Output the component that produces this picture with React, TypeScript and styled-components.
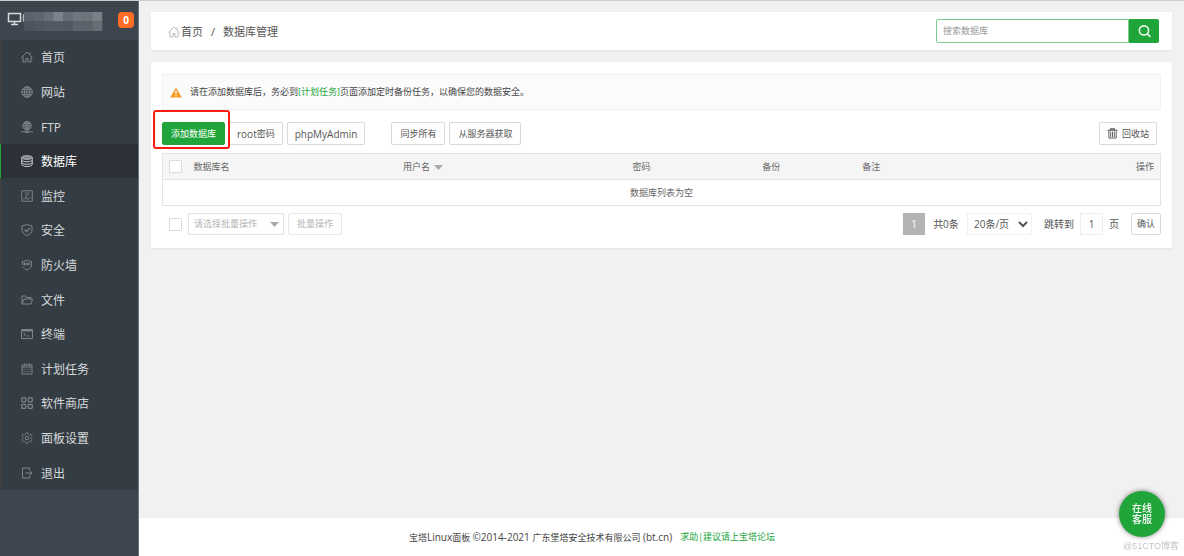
import React from "react";
import styled, { createGlobalStyle, css } from "styled-components";

const green = "#20a53a";
const line = "#e4e4e4";

const GlobalStyle = createGlobalStyle`
  * { box-sizing: border-box; }
  body {
    margin: 0;
    background: #f1f1f1;
    color: #666;
    font-family: "Open Sans", "Noto Sans CJK SC", sans-serif;
    font-size: 9px;
    line-height: 14px;
  }
  button, input, select { font: inherit; color: inherit; margin: 0; }
  button { cursor: pointer; }
  a { text-decoration: none; color: inherit; }
`;

const Page = styled.div`
  display: flex;
  min-height: 100vh;
  border-top: 1px solid #ccc;
`;

const Sidebar = styled.aside`
  flex: 0 0 139px;
  background: #3d454e;
  border-right: 1px solid #6c737a;
`;

const Brand = styled.header`
  display: flex;
  align-items: center;
  height: 39px;
  padding: 0 4px 2px 7px;
`;

const HostMask = styled.svg`
  flex: none;
  margin-right: auto;
`;

const Count = styled.span`
  width: 16px;
  border-radius: 4px;
  background: #ff6c26;
  color: #fff;
  font-size: 10px;
  font-weight: 700;
  line-height: 16px;
  text-align: center;
`;

const Menu = styled.nav`
  display: grid;
  grid-auto-rows: 1fr;
  min-height: 450px;
  background: #353d44;
`;

const MenuItem = styled.a<{ $active?: boolean }>`
  display: flex;
  align-items: center;
  gap: 8px;
  padding-left: 20px;
  border-left: 1px solid #463f3e;
  color: #d6d9db;
  font-size: 12px;
  line-height: 18px;
  svg { color: #7e8489; }
  ${(p) =>
    p.$active &&
    css`
      background: #2c3138;
      border-left-color: ${green};
      color: #fff;
      svg { color: #c3c6c9; }
    `}
`;

const MenuLabel = styled.span`
  padding-top: 2px;
`;

const Main = styled.main`
  flex: 1;
  min-width: 0;
  display: flex;
  flex-direction: column;
`;

const Content = styled.div`
  flex: 1;
  display: flex;
  flex-direction: column;
  gap: 12px;
  padding: 11px 12px 12px;
`;

const Card = styled.section`
  background: #fff;
  box-shadow: 0 1px 2px rgba(0, 0, 0, 0.06);
`;

const TopBar = styled(Card)`
  display: flex;
  align-items: center;
  justify-content: space-between;
  height: 38px;
  padding: 0 13px 0 17px;
`;

const Crumbs = styled.nav`
  display: flex;
  align-items: center;
  padding-top: 2px;
  color: #555;
  font-size: 11px;
  line-height: 16px;
  svg { color: #bbb; margin-right: 1px; }
`;

const Slash = styled.span`
  padding: 0 8px;
`;

const SearchForm = styled.form`
  display: flex;
  height: 24px;
`;

const SearchInput = styled.input`
  width: 193px;
  padding: 0 6px;
  border: 1px solid #7fca8d;
  border-radius: 2px 0 0 2px;
  background: #fff;
  outline: 0;
  &::placeholder { color: #999; opacity: 1; }
`;

const SearchButton = styled.button`
  display: grid;
  place-items: center;
  width: 30px;
  padding: 0;
  border: 0;
  border-radius: 0 2px 2px 0;
  background: ${green};
  color: #e9f6eb;
`;

const Panel = styled(Card)`
  padding: 12px 11px 13px;
`;

const Notice = styled.p`
  display: flex;
  align-items: center;
  height: 36px;
  margin: 0;
  padding: 0 7px;
  border: 1px solid #f0f0f0;
  background: #fbfbfb;
  color: #444;
  svg { margin-right: 8px; }
`;

const GreenLink = styled.a`
  color: ${green};
`;

const Latin = styled.span`
  font-size: 10px;
`;

const Toolbar = styled.div`
  display: flex;
  gap: 4px;
  padding: 12px 4px 8px 0;
`;

const Button = styled.button<{ $primary?: boolean; $muted?: boolean; $tight?: boolean }>`
  display: inline-flex;
  align-items: center;
  height: 23px;
  padding: 0 ${(p) => (p.$tight ? 7 : 8)}px;
  border: 1px solid ${(p) => (p.$primary ? green : p.$muted ? "#e8e8e8" : "#d9d9d9")};
  border-radius: 2px;
  background: ${(p) => (p.$primary ? green : "#fff")};
  color: ${(p) => (p.$primary ? "#fff" : p.$muted ? "#b5b5b5" : "#555")};
  white-space: nowrap;
  svg { margin-right: 4px; }
`;

const Marked = styled.div`
  position: relative;
  &::after {
    content: "";
    position: absolute;
    inset: -12px -5px -4px -9px;
    border: 2px solid #fb1c10;
    border-radius: 3px;
    pointer-events: none;
  }
`;

const Spacer = styled.span<{ $wide?: boolean }>`
  ${(p) => (p.$wide ? "flex: 1;" : "width: 18px;")}
`;

const Table = styled.table`
  width: 100%;
  table-layout: fixed;
  border-collapse: collapse;
  border: 1px solid ${line};
`;

const Th = styled.th<{ $w?: string; $right?: boolean }>`
  width: ${(p) => p.$w ?? "auto"};
  height: 26px;
  padding: 0 6px;
  border-bottom: 1px solid ${line};
  background: #f5f5f5;
  font-weight: 400;
  text-align: ${(p) => (p.$right ? "right" : "left")};
  svg { margin-left: 4px; vertical-align: middle; }
`;

const Empty = styled.td`
  height: 26px;
  padding: 0;
  text-align: center;
`;

const Check = styled.input.attrs({ type: "checkbox" })`
  appearance: none;
  display: block;
  flex: none;
  width: 13px;
  height: 13px;
  border: 1px solid #dcdcdc;
  border-radius: 1px;
  background: #fff;
  &:checked { background: ${green}; }
`;

const TableFoot = styled.div`
  display: flex;
  align-items: center;
  gap: 4px;
  padding: 7px 0 0 7px;
  ${Button} { height: 22px; }
`;

const BatchBox = styled.label`
  display: grid;
  align-items: center;
  width: 96px;
  height: 22px;
  margin-left: 2px;
  color: #b5b5b5;
  > * { grid-area: 1 / 1; }
  svg { justify-self: end; margin-right: 5px; pointer-events: none; }
`;

const BatchSelect = styled.select`
  appearance: none;
  height: 22px;
  padding: 0 5px;
  border: 1px solid #e4e4e4;
  border-radius: 1px;
  background: #fff;
`;

const Pager = styled.div`
  display: flex;
  align-items: center;
  color: #555;
  font-size: 10px;
`;

const Current = styled.span`
  width: 22px;
  background: #b3b3b3;
  color: #fff;
  line-height: 22px;
  text-align: center;
`;

const Total = styled.span`
  width: 42px;
  line-height: 22px;
  text-align: center;
`;

const PageSize = styled.select`
  width: 65px;
  height: 22px;
  margin-right: 12px;
  padding: 0 2px;
  border: 1px solid #f0f0f0;
  background: #fff;
`;

const JumpLabel = styled.label`
  display: flex;
  align-items: center;
  gap: 6px;
  margin-right: 12px;
`;

const PageNumber = styled.input`
  width: 23px;
  height: 22px;
  padding: 0;
  border: 1px solid #eee;
  text-align: center;
`;

const Confirm = styled(Button)`
  padding: 0 5px;
  font-size: 9px;
`;

const Footer = styled.footer`
  display: flex;
  align-items: center;
  justify-content: center;
  gap: 8px;
  height: 38px;
  padding-right: 139px;
  background: #fff;
  color: #444;
`;

const Service = styled.button`
  position: fixed;
  right: 19px;
  bottom: 19px;
  width: 46px;
  height: 46px;
  padding: 0 12px;
  border: 0;
  border-radius: 50%;
  background: ${green};
  box-shadow: 0 0 5px rgba(0, 0, 0, 0.5);
  color: #fff;
  font-size: 10px;
  font-weight: 500;
  line-height: 11px;
`;

const Watermark = styled.span`
  position: fixed;
  right: 5px;
  bottom: 3px;
  color: #c4c4c4;
  font-family: "Liberation Sans", "Noto Sans CJK SC", sans-serif;
`;

const Icon = ({
  children,
  size = 12,
  weight = 2,
}: {
  children: React.ReactNode;
  size?: number;
  weight?: number;
}) => (
  <svg width={size} height={size} viewBox="0 0 24 24" fill="none" stroke="currentColor" strokeWidth={weight} aria-hidden="true">
    {children}
  </svg>
);

const homeShape = (
  <>
    <path d="M1 13 12 2l11 11" />
    <path d="M4 11v11h6v-7h4v7h6V11M18 7V3" />
  </>
);

const menu: { label: string; icon: React.ReactNode; active?: boolean }[] = [
  { label: "首页", icon: homeShape },
  {
    label: "网站",
    icon: (
      <>
        <circle cx="12" cy="12" r="10.5" />
        <ellipse cx="12" cy="12" rx="5" ry="10.5" />
        <path d="M12 1v22M1 12h22M3 6.500h18M3 17.500h18" />
      </>
    ),
  },
  {
    label: "FTP",
    icon: (
      <>
        <circle cx="12" cy="9.500" r="8.500" />
        <ellipse cx="12" cy="9.500" rx="4" ry="8.500" />
        <path d="M12 1v17M4 9.500h16M5 5h14M5 14h14" />
        <path d="M0 21.500h9M15 21.500h9M9 20h6v3H9z" />
      </>
    ),
  },
  {
    label: "数据库",
    active: true,
    icon: (
      <>
        <ellipse cx="12" cy="5" rx="10.500" ry="3.500" fill="currentColor" fillOpacity="0.5" />
        <path d="M1.500 5v14c0 2 4.500 4 10.500 4s10.500-2 10.500-4V5M1.500 10c0 2 4.500 3.500 10.500 3.500S22.500 12 22.500 10M1.500 15c0 2 4.500 3.500 10.500 3.500S22.500 17 22.500 15" />
      </>
    ),
  },
  {
    label: "监控",
    icon: (
      <>
        <path d="M1.500 1.500h21v21h-21z" />
        <path d="M7 6h10M8 10h8M4 18h4l2-5 3 7 2-4h5" strokeWidth="1.5" />
      </>
    ),
  },
  {
    label: "安全",
    icon: (
      <>
        <path d="M12 1 22 4v8c0 5-4 9-10 11C6 21 2 17 2 12V4z" />
        <path d="m7 11 4 4 7-7" strokeWidth="2.500" />
      </>
    ),
  },
  {
    label: "防火墙",
    icon: (
      <>
        <path d="M3 9V5c4 0 6-1 9-3 3 2 5 3 9 3v7c0 5-4 8-9 10-4-2-7-4-8-7" />
        <path d="M1 10h17M7 7v6M12 7v6M16 7v5" />
      </>
    ),
  },
  {
    label: "文件",
    icon: <path d="M2 20V4h7l2 3h9v3M2 20l4-10h17l-3 10z" />,
  },
  {
    label: "终端",
    icon: (
      <>
        <path d="M1 3h22v18H1z" />
        <path d="M1 5.500h22" strokeWidth="3" />
        <path d="m5 10 4 3-4 3M11 16h6" />
      </>
    ),
  },
  {
    label: "计划任务",
    icon: (
      <>
        <path d="M2 4h20v18H2zM2 8h20M7 1v4M12 1v4M17 1v4" />
        <path d="M5 12.500h14M5 17h14" strokeDasharray="2 2" />
      </>
    ),
  },
  {
    label: "软件商店",
    icon: (
      <>
        <rect x="1.500" y="1.500" width="8" height="8" rx="1" strokeWidth="2.500" />
        <rect x="14.500" y="1.500" width="8" height="8" rx="1" strokeWidth="2.500" />
        <rect x="1.500" y="14.500" width="8" height="8" rx="1" strokeWidth="2.500" />
        <rect x="14.500" y="14.500" width="8" height="8" rx="1" strokeWidth="2.500" />
      </>
    ),
  },
  {
    label: "面板设置",
    icon: (
      <>
        <path d="M10 1.500h4l1 3 2 1 3-1 2 4-2 2v3l2 2-2 4-3-1-2 1-1 3h-4l-1-3-2-1-3 1-2-4 2-2v-3l-2-2 2-4 3 1 2-1z" strokeWidth="1.600" />
        <circle cx="12" cy="12" r="3.500" />
      </>
    ),
  },
  {
    label: "退出",
    icon: <path d="M17 7V2H3v20h14v-5M9 12h13M18 8l4 4-4 4" />,
  },
];

const maskShades = [
  ["#5a626b", "#5f666f", "#686f77", "#7c828a", "#656c75", "#707780", "#6d747c", "#7a8088"],
  ["#4b535c", "#4e565f", "#515962", "#535b64", "#4f5760", "#5b636c", "#5a626a", "#666d75"],
];

const Triangle = () => (
  <svg width="9" height="5" viewBox="0 0 9 5" aria-hidden="true">
    <path d="M0 0h9L4.500 5z" fill="#aaa" />
  </svg>
);

export default function App() {
  return (
    <>
      <GlobalStyle />
      <Page>
        <Sidebar>
          <Brand>
            <HostMask width="96" height="22" viewBox="0 0 96 22" aria-hidden="true">
              <path d="M1.500 4.500h12v8h-12zM4 15.500h7M7.500 12.500v3" fill="none" stroke="#d8dadc" strokeWidth="1.500" />
              <path d="M17 5q-2 4 0 8" fill="none" stroke="#d8dadc" />
              {maskShades.map((row, y) =>
                row.map((fill, x) => (
                  <rect key={`${x}-${y}`} x={17 + x * 9.750} y={3 + y * 9.500} width="10" height="9.500" fill={fill} />
                ))
              )}
            </HostMask>
            <Count>0</Count>
          </Brand>
          <Menu>
            {menu.map((item) => (
              <MenuItem key={item.label} href="#" $active={item.active}>
                <Icon>{item.icon}</Icon>
                <MenuLabel>{item.label}</MenuLabel>
              </MenuItem>
            ))}
          </Menu>
        </Sidebar>
        <Main>
          <Content>
            <TopBar>
              <Crumbs>
                <Icon>{homeShape}</Icon>
                <a href="#">首页</a>
                <Slash>/</Slash>
                <span>数据库管理</span>
              </Crumbs>
              <SearchForm>
                <SearchInput aria-label="搜索数据库" placeholder="搜索数据库" />
                <SearchButton type="button" aria-label="搜索">
                  <Icon size={13} weight={3}>
                    <circle cx="11" cy="10" r="8.500" />
                    <path d="m17 16 6 6" />
                  </Icon>
                </SearchButton>
              </SearchForm>
            </TopBar>
            <Panel>
              <Notice>
                <svg width="12" height="11" viewBox="0 0 24 22" aria-hidden="true">
                  <path d="M12 1 23.500 21H.5z" fill="#f79a1c" />
                  <path d="M12 7v7M12 16v3" stroke="#fff" strokeWidth="2.600" />
                </svg>
                <span>
                  请在添加数据库后，务必到<GreenLink href="#">[计划任务]</GreenLink>页面添加定时备份任务，以确保您的数据安全。
                </span>
              </Notice>
              <Toolbar>
                <Marked>
                  <Button $primary>添加数据库</Button>
                </Marked>
                <Button $tight>
                  <Latin>root</Latin>密码
                </Button>
                <Button $tight>
                  <Latin>phpMyAdmin</Latin>
                </Button>
                <Spacer />
                <Button>同步所有</Button>
                <Button>从服务器获取</Button>
                <Spacer $wide />
                <Button $tight>
                  <Icon size={11}>
                    <path d="M1 5h22M8 5V2h8v3" strokeWidth="2.500" />
                    <path d="M4 5v17h16V5M8 8v12M12 8v12M16 8v12" />
                  </Icon>
                  回收站
                </Button>
              </Toolbar>
              <Table>
                <thead>
                  <tr>
                    <Th $w="25px">
                      <Check aria-label="全选" />
                    </Th>
                    <Th $w="21%">数据库名</Th>
                    <Th $w="23%">
                      用户名
                      <Triangle />
                    </Th>
                    <Th $w="13%">密码</Th>
                    <Th $w="10%">备份</Th>
                    <Th>备注</Th>
                    <Th $right>操作</Th>
                  </tr>
                </thead>
                <tbody>
                  <tr>
                    <Empty colSpan={7}>数据库列表为空</Empty>
                  </tr>
                </tbody>
              </Table>
              <TableFoot>
                <Check aria-label="选择全部数据库" />
                <BatchBox>
                  <BatchSelect aria-label="批量操作">
                    <option>请选择批量操作</option>
                  </BatchSelect>
                  <Triangle />
                </BatchBox>
                <Button $muted>批量操作</Button>
                <Spacer $wide />
                <Pager>
                  <Current>1</Current>
                  <Total>共0条</Total>
                  <PageSize aria-label="每页条数">
                    <option>20条/页</option>
                  </PageSize>
                  <JumpLabel>
                    跳转到
                    <PageNumber defaultValue="1" />
                    页
                  </JumpLabel>
                  <Confirm>确认</Confirm>
                </Pager>
              </TableFoot>
            </Panel>
          </Content>
          <Footer>
            <span>
              宝塔<Latin>Linux</Latin>面板 <Latin>©2014-2021 </Latin>广东堡塔安全技术有限公司<Latin> (bt.cn)</Latin>
            </span>
            <GreenLink href="#">求助|建议请上宝塔论坛</GreenLink>
          </Footer>
        </Main>
      </Page>
      <Service>在线客服</Service>
      <Watermark>@51CTO博客</Watermark>
    </>
  );
}
